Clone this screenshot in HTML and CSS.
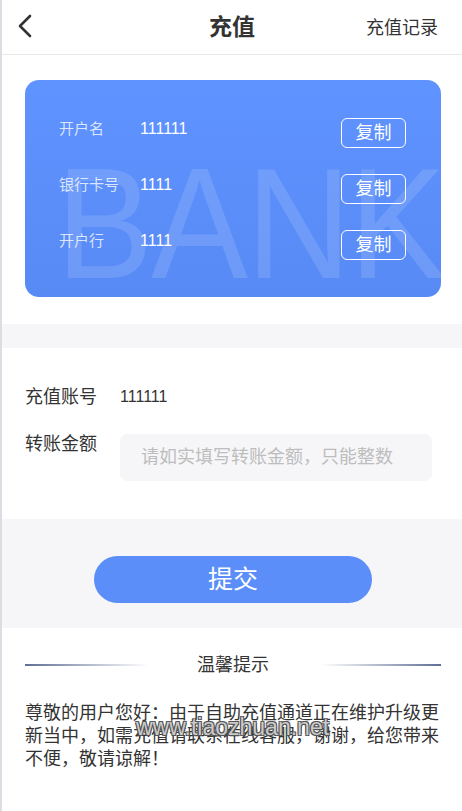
FILE: index.html
```html
<!DOCTYPE html>
<html lang="zh">
<head>
<meta charset="utf-8">
<title>充值</title>
<link rel="stylesheet" href="styles.css">
</head>
<body>
<div class="page">
  <header class="header">
    <span class="back">
      <svg width="16" height="24" viewBox="0 0 16 24"><path d="M13 2 L3 12 L13 22" fill="none" stroke="#333" stroke-width="2.6" stroke-linecap="round" stroke-linejoin="round"/></svg>
    </span>
    <h1 class="title">充值</h1>
    <span class="record">充值记录</span>
  </header>

  <section class="card-wrap">
    <div class="card">
      <div class="card-bg" aria-hidden="true">BANK</div>
      <div class="card-row">
        <span class="card-label">开户名</span>
        <span class="card-value">111111</span>
        <span class="copy">复制</span>
      </div>
      <div class="card-row">
        <span class="card-label">银行卡号</span>
        <span class="card-value">1111</span>
        <span class="copy">复制</span>
      </div>
      <div class="card-row">
        <span class="card-label">开户行</span>
        <span class="card-value">1111</span>
        <span class="copy">复制</span>
      </div>
    </div>
  </section>

  <div class="band"></div>

  <section class="form">
    <div class="form-row">
      <span class="form-label">充值账号</span>
      <span class="form-value">111111</span>
    </div>
    <div class="form-row top">
      <span class="form-label">转账金额</span>
      <div class="input">请如实填写转账金额，只能整数</div>
    </div>
  </section>

  <section class="submit-band">
    <button class="submit">提交</button>
  </section>

  <section class="tips">
    <div class="tips-head">
      <span class="line left"></span>
      <span class="tips-title">温馨提示</span>
      <span class="line right"></span>
    </div>
    <p class="tips-text">尊敬的用户您好：由于自助充值通道正在维护升级更新当中，如需充值请联系在线客服，谢谢，给您带来不便，敬请谅解！</p>
    <span class="watermark">www.tiaozhuan.net</span>
  </section>
</div>
</body>
</html>
```
FILE: styles.css
```css
* { box-sizing: border-box; margin: 0; padding: 0; }
html, body { background: #fff; }
body {
  font-family: "Liberation Sans", "Noto Sans CJK SC", sans-serif;
  color: #333;
  width: 462px;
  min-height: 811px;
  border-left: 2px solid #dcdce2;
}
.page { width: 460px; position: relative; }

.header {
  height: 55px;
  border-bottom: 1px solid #e8e8e8;
  display: flex;
  align-items: center;
  justify-content: space-between;
  padding: 0 24px 0 15px;
  position: relative;
}
.back { display: flex; align-items: center; height: 24px; margin-top: -2px; }
.title {
  position: absolute;
  left: 0; right: 0;
  text-align: center;
  font-size: 23px;
  font-weight: bold;
  color: #333;
  pointer-events: none;
  line-height: 54px;
}
.record { font-size: 18px; color: #333; margin-top: -2px; }

.card-wrap { padding: 25px 21px 27px 23px; }
.card {
  position: relative;
  overflow: hidden;
  height: 217px;
  border-radius: 14px;
  background: linear-gradient(180deg, #5f93ff 0%, #588af5 100%);
  padding: 38px 35px 0 34px;
  display: flex;
  flex-direction: column;
  gap: 26px;
}
.card-bg {
  position: absolute;
  left: 31px;
  top: 64px;
  font-family: "Liberation Sans", sans-serif;
  font-weight: normal;
  font-size: 158px;
  line-height: 1;
  letter-spacing: -2px;
  transform: scaleX(0.92);
  transform-origin: left top;
  color: rgba(255,255,255,0.13);
  white-space: nowrap;
  pointer-events: none;
}
.card-row {
  position: relative;
  display: flex;
  align-items: flex-start;
  height: 30px;
}
.card-label {
  width: 81px;
  font-size: 15px;
  line-height: 22px;
  color: rgba(255,255,255,0.78);
}
.card-value {
  flex: 1;
  font-size: 16px;
  line-height: 22px;
  color: #fff;
}
.copy {
  width: 65px;
  height: 30px;
  border: 1px solid #fff;
  border-radius: 6px;
  color: #fff;
  font-size: 18px;
  line-height: 28px;
  text-align: center;
}

.band { height: 24px; background: #f6f6f8; }

.form { padding: 37px 30px 38px 23px; display: flex; flex-direction: column; gap: 25px; }
.form-row { display: flex; align-items: center; }
.form-row.top { align-items: flex-start; }
.form-label { width: 95px; font-size: 18px; line-height: 24px; color: #333; }
.form-row.top .form-label { line-height: 20px; }
.form-value { font-size: 16px; line-height: 24px; color: #333; }
.input {
  flex: 1;
  height: 47px;
  background: #f6f6f8;
  border-radius: 7px;
  padding-left: 21px;
  font-size: 18px;
  line-height: 47px;
  color: #bdbdbd;
}

.submit-band {
  height: 109px;
  background: #f6f6f8;
  display: flex;
  justify-content: center;
  padding-top: 37px;
  padding-left: 2px;
}
.submit {
  width: 278px;
  height: 47px;
  border: none;
  border-radius: 24px;
  background: #5b8ef9;
  color: #fff;
  font-family: "Liberation Sans", "Noto Sans CJK SC", sans-serif;
  font-size: 25px;
  line-height: 47px;
}

.tips { position: relative; padding: 25px 21px 40px 23px; }
.tips-head {
  display: flex;
  align-items: center;
  justify-content: space-between;
  height: 24px;
}
.line { height: 2px; width: 123px; }
.line.left { background: linear-gradient(90deg, #5f6f95 0%, rgba(95,111,149,0) 100%); }
.line.right { width: 121px; background: linear-gradient(90deg, rgba(95,111,149,0) 0%, #5f6f95 100%); }
.tips-title { font-size: 18px; color: #333; line-height: 24px; margin-right: 2px; }
.tips-text {
  margin-top: 25px;
  font-size: 18px;
  line-height: 23px;
  color: #333;
}
.watermark {
  position: absolute;
  left: 134px;
  top: 86px;
  font-size: 23px;
  line-height: 26px;
  color: rgba(215,215,215,0.92);
  text-shadow: 1px 1px 0 #555, -1px -1px 0 #555, 1px -1px 0 #555, -1px 1px 0 #555;
  white-space: nowrap;
}
```
